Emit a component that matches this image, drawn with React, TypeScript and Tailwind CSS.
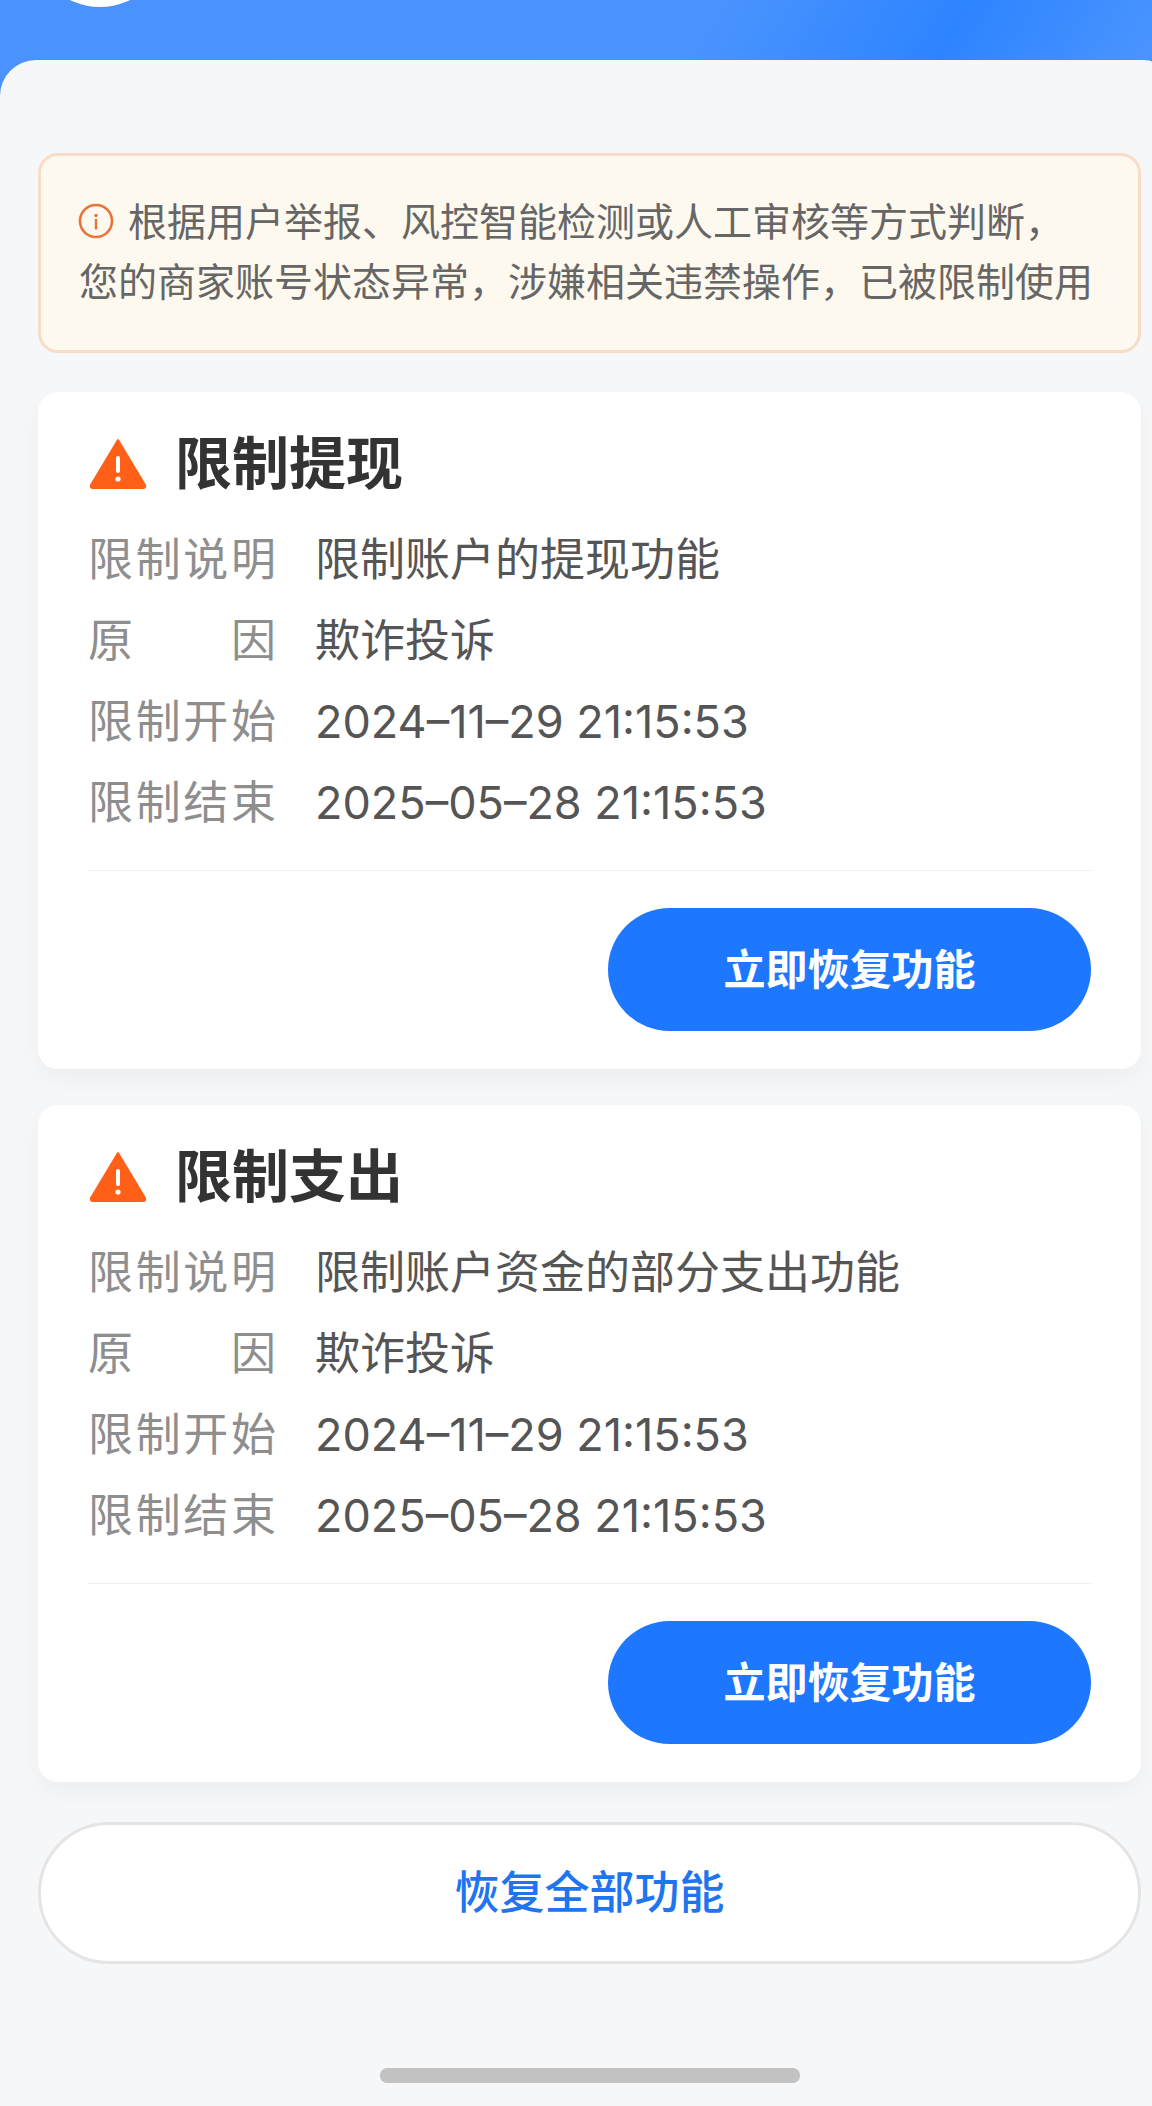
import React from 'react';

const FONT = '"Inter", "Noto Sans CJK SC", sans-serif';

const WarnIcon = () => (
  <svg width="60" height="52" viewBox="0 0 60 52" className="shrink-0">
    <path d="M30 2 L57 47 Q58 50 55 50 L5 50 Q2 50 3 47 Z" fill="#ff5f17" stroke="#ff5f17" strokeWidth="2" strokeLinejoin="round" />
    <rect x="28" y="18" width="4" height="17" rx="2" fill="#fff" />
    <circle cx="30" cy="41" r="2.6" fill="#fff" />
  </svg>
);

const InfoIcon = () => (
  <svg width="36" height="36" viewBox="0 0 36 36" className="absolute left-[-1px] top-[-1px]">
    <circle cx="18" cy="18" r="16" fill="none" stroke="#e8733a" strokeWidth="2.6" />
    <circle cx="18" cy="12.5" r="1.7" fill="#e8733a" />
    <rect x="16.8" y="16" width="2.4" height="10.5" fill="#e8733a" />
  </svg>
);

const Row = ({ label, value }: { label: string; value: string }) => (
  <div className="flex h-[81px] items-center">
    <span className="w-[227px] shrink-0">
      <span className="block w-[188px] text-[45px] leading-[60px] text-[#8e8e8e] [text-align-last:justify]">{label}</span>
    </span>
    <span className="text-[45px] leading-[60px] text-[#555555]">{value}</span>
  </div>
);

const Card = ({ title, desc }: { title: string; desc: string }) => (
  <div className="h-[677px] rounded-[20px] bg-white px-[50px] pt-[32px] shadow-[0_10px_24px_rgba(0,0,0,0.04)]">
    <div className="flex h-[80px] items-center gap-[27px]">
      <WarnIcon />
      <span className="text-[57px] font-bold leading-[70px] text-[#333333]">{title}</span>
    </div>
    <div className="mt-[15px]">
      <Row label="限制说明" value={desc} />
      <Row label="原因" value="欺诈投诉" />
      <Row label="限制开始" value="2024–11–29 21:15:53" />
      <Row label="限制结束" value="2025–05–28 21:15:53" />
    </div>
    <div className="mt-[27px] h-px bg-[#eeeeee]" />
    <div className="mt-[37px] flex justify-end">
      <button className="h-[123px] w-[483px] rounded-full bg-[#1e78ff] text-[42px] font-semibold text-white">立即恢复功能</button>
    </div>
  </div>
);

export default function App() {
  return (
    <div className="relative h-[2106px] w-[1152px] overflow-hidden bg-[linear-gradient(120deg,#4a92ff_0%,#4b94ff_30%,#2e84ff_41%,#4a94ff_50%)]" style={{ fontFamily: FONT }}>
      {/* header remnant */}
      <div className="absolute left-[32px] top-[-129px] h-[136px] w-[136px] rounded-full bg-white" />

      <div className="mt-[60px] h-[2046px] rounded-tl-[36px] rounded-tr-[9px_2px] bg-[#f6f7f9] pl-[38px] pr-[11px] pt-[93px]">
        <div className="h-[200px] rounded-[20px] border-[3px] border-[#f9dcc6] bg-[#fef9ee] pl-[38px] pr-[20px] pt-[36px] text-[39px] leading-[60px] text-[#666666]">
          <div className="whitespace-nowrap">
            <span className="relative mr-[15px] inline-block h-[34px] w-[34px] align-[-2px]"><InfoIcon /></span>
            根据用户举报、风控智能检测或人工审核等方式判断，
          </div>
          <div className="whitespace-nowrap">您的商家账号状态异常，涉嫌相关违禁操作，已被限制使用</div>
        </div>

        <div className="mt-[39px] flex flex-col gap-[36px]">
          <Card title="限制提现" desc="限制账户的提现功能" />
          <Card title="限制支出" desc="限制账户资金的部分支出功能" />
        </div>

        <button className="mt-[40px] h-[142px] w-[1103px] rounded-[71px] border-[3px] border-[#e5e5e5] bg-white text-[45px] font-medium text-[#1f74f0]">恢复全部功能</button>

        <div className="ml-[342px] mt-[104px] h-[15px] w-[420px] rounded-[7px] bg-[#c2c2c2]" />
      </div>
    </div>
  );
}
